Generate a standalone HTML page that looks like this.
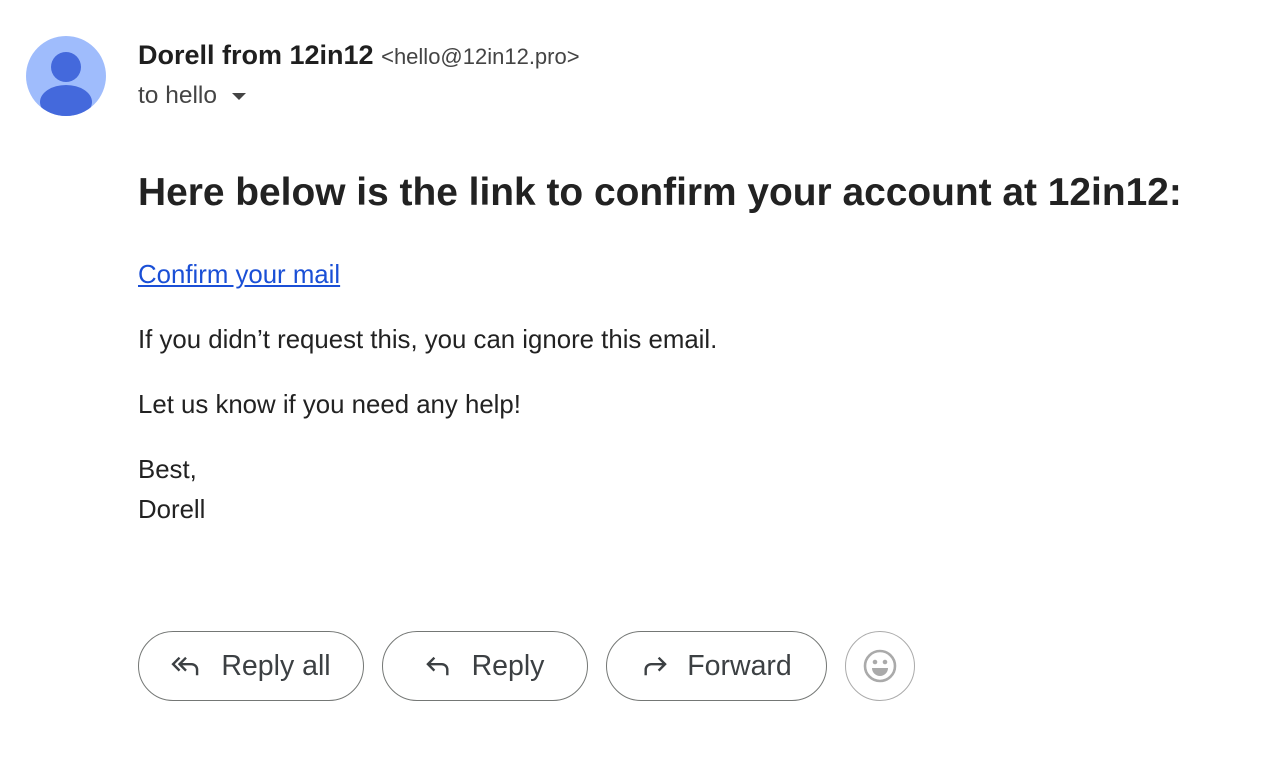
<!DOCTYPE html>
<html><head><meta charset="utf-8"><style>
body{margin:0;width:1268px;height:760px;background:#fff;font-family:"Liberation Sans",Arial,sans-serif;position:relative;overflow:hidden;color:#222}
.abs{position:absolute;white-space:nowrap}
.btn{position:absolute;top:631px;height:68px;border:1.5px solid #747775;border-radius:36px;box-sizing:content-box;display:flex;align-items:center;font-size:28.5px;color:#3c4043}
.btn svg{margin-right:20px}
</style></head><body>
<svg class="abs" style="left:26px;top:36px" width="80" height="80" viewBox="0 0 80 80">
<defs><clipPath id="c"><circle cx="40" cy="40" r="40"/></clipPath></defs>
<circle cx="40" cy="40" r="40" fill="#9fbcfc"/>
<g clip-path="url(#c)" fill="#4469dc"><circle cx="40" cy="31" r="15"/><ellipse cx="40" cy="66" rx="26" ry="17"/></g>
</svg>
<div class="abs" style="left:138px;top:40px;font-size:27px;font-weight:bold;color:#1f1f1f">Dorell from 12in12 <span style="font-weight:normal;font-size:22px;color:#444">&lt;hello@12in12.pro&gt;</span></div>
<div class="abs" style="left:138px;top:82px;font-size:24.5px;color:#444">to hello <span style="display:inline-block;margin-left:8px;vertical-align:middle;width:0;height:0;border-left:7px solid transparent;border-right:7px solid transparent;border-top:7px solid #444"></span></div>
<div class="abs" style="left:138px;top:171px;font-size:38.9px;font-weight:bold;color:#222">Here below is the link to confirm your account at 12in12:</div>
<div class="abs" style="left:138px;top:261px;font-size:25.8px;color:#1a4fd6;text-decoration:underline">Confirm your mail</div>
<div class="abs" style="left:138px;top:326px;font-size:25.8px">If you didn’t request this, you can ignore this email.</div>
<div class="abs" style="left:138px;top:391px;font-size:25.8px">Let us know if you need any help!</div>
<div class="abs" style="left:138px;top:450px;font-size:25.8px;line-height:40px">Best,<br>Dorell</div>
<div class="btn" style="left:138px;width:224px;justify-content:center">
<svg width="30" height="24" viewBox="0 0 32 26" fill="none" stroke="#3c4043" stroke-width="2.6"><path d="M9 4L2 11l7 7"/><path d="M16 4L9 11l7 7"/><path d="M9 11h13a6 6 0 0 1 6 6v6"/></svg>Reply all</div>
<div class="btn" style="left:382px;width:204px;justify-content:center">
<svg width="26" height="24" viewBox="0 0 28 26" fill="none" stroke="#3c4043" stroke-width="2.6"><path d="M9 4L2 11l7 7"/><path d="M2 11h15a6 6 0 0 1 6 6v6"/></svg>Reply</div>
<div class="btn" style="left:606px;width:219px;justify-content:center">
<svg width="26" height="24" viewBox="0 0 28 26" fill="none" stroke="#3c4043" stroke-width="2.6"><path d="M19 4l7 7-7 7"/><path d="M26 11H11a6 6 0 0 0-6 6v6"/></svg>Forward</div>
<div class="btn" style="left:845px;width:68px;border-color:#aaa;justify-content:center">
<svg style="margin:0" width="34" height="34" viewBox="0 0 34 34"><circle cx="17" cy="17" r="15" fill="none" stroke="#aaa" stroke-width="2.6"/><circle cx="12" cy="13" r="2.3" fill="#aaa"/><circle cx="22" cy="13" r="2.3" fill="#aaa"/><path d="M9 19h16a8 8 0 0 1-16 0z" fill="#aaa"/></svg></div>
</body></html>
